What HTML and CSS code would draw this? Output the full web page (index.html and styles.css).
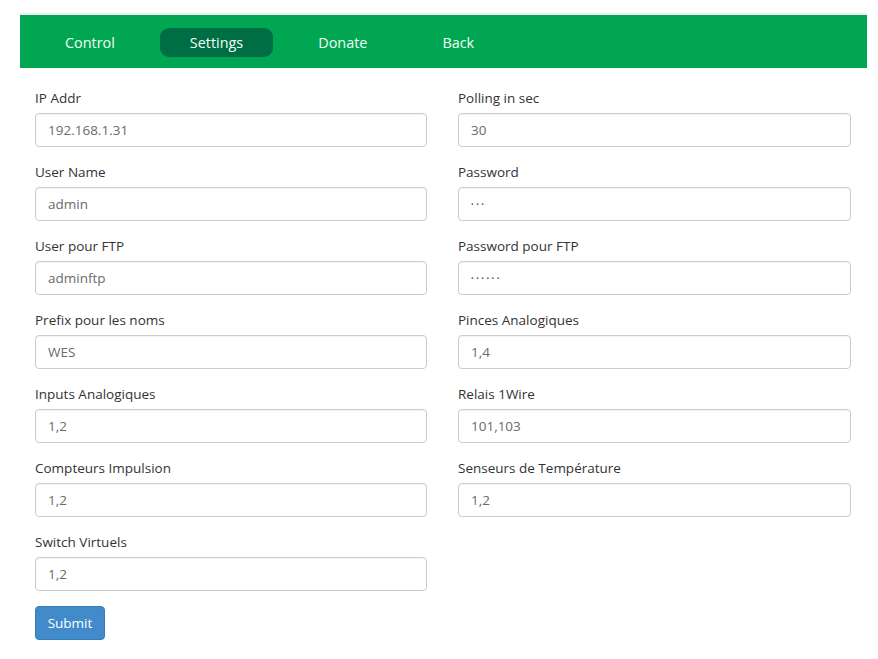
FILE: index.html
```html
<!DOCTYPE html>
<html>
<head>
<meta charset="utf-8">
<link rel="stylesheet" href="styles.css">
</head>
<body>
<div class="container">
  <nav class="navbar">
    <a class="nav-item">Control</a>
    <a class="nav-item active">Settings</a>
    <a class="nav-item">Donate</a>
    <a class="nav-item">Back</a>
  </nav>
  <form class="form">
    <div class="grid">
      <div class="group"><label>IP Addr</label><div class="input">192.168.1.31</div></div>
      <div class="group"><label>Polling in sec</label><div class="input">30</div></div>
      <div class="group"><label>User Name</label><div class="input">admin</div></div>
      <div class="group"><label>Password</label><div class="input pw">•••</div></div>
      <div class="group"><label>User pour FTP</label><div class="input">adminftp</div></div>
      <div class="group"><label>Password pour FTP</label><div class="input pw">••••••</div></div>
      <div class="group"><label>Prefix pour les noms</label><div class="input">WES</div></div>
      <div class="group"><label>Pinces Analogiques</label><div class="input">1,4</div></div>
      <div class="group"><label>Inputs Analogiques</label><div class="input">1,2</div></div>
      <div class="group"><label>Relais 1Wire</label><div class="input">101,103</div></div>
      <div class="group"><label>Compteurs Impulsion</label><div class="input">1,2</div></div>
      <div class="group"><label>Senseurs de Température</label><div class="input">1,2</div></div>
      <div class="group"><label>Switch Virtuels</label><div class="input">1,2</div></div>
    </div>
    <button type="button" class="btn">Submit</button>
  </form>
</div>
</body>
</html>
```
FILE: styles.css
```css
html, body {
  margin: 0;
  padding: 0;
  background: #fff;
}
body {
  font-family: "Open Sans", "Liberation Sans", sans-serif;
  font-size: 13.5px;
  color: #333;
}
.container {
  width: 847px;
  margin-left: 20px;
  padding-top: 13px;
}
.navbar {
  box-sizing: border-box;
  display: flex;
  align-items: center;
  gap: 15px;
  height: 55px;
  padding: 2px 0 0 15px;
  background: #00a651;
  border-top: 2px solid #ececec;
}
.nav-item {
  display: block;
  padding: 0 30px;
  height: 29px;
  line-height: 29px;
  font-size: 14.4px;
  color: #f2fff6;
  border-radius: 9px;
}
.nav-item.active {
  background: #006e45;
}
.form {
  padding: 20px 15px 0 15px;
}
.grid {
  display: grid;
  grid-template-columns: 392px 393px;
  column-gap: 31px;
}
.group {
  margin-bottom: 15px;
}
label {
  display: block;
  height: 20px;
  line-height: 20px;
  margin-bottom: 5px;
  color: #333;
}
.input {
  box-sizing: border-box;
  height: 34px;
  line-height: 33px;
  padding: 0 12px;
  border: 1px solid #ccc;
  border-radius: 4px;
  color: #6b6b6b;
  box-shadow: inset 0 1px 1px rgba(0,0,0,0.05);
}
.input.pw {
  font-size: 7px;
  letter-spacing: 2.5px;
  color: #555;
}
.btn {
  display: block;
  height: 34px;
  width: 70px;
  padding: 0;
  border: 1px solid #357ebd;
  border-radius: 4px;
  background: #428bca;
  color: #fff;
  font-family: "Open Sans", "Liberation Sans", sans-serif;
  font-size: 13.5px;
}
```
